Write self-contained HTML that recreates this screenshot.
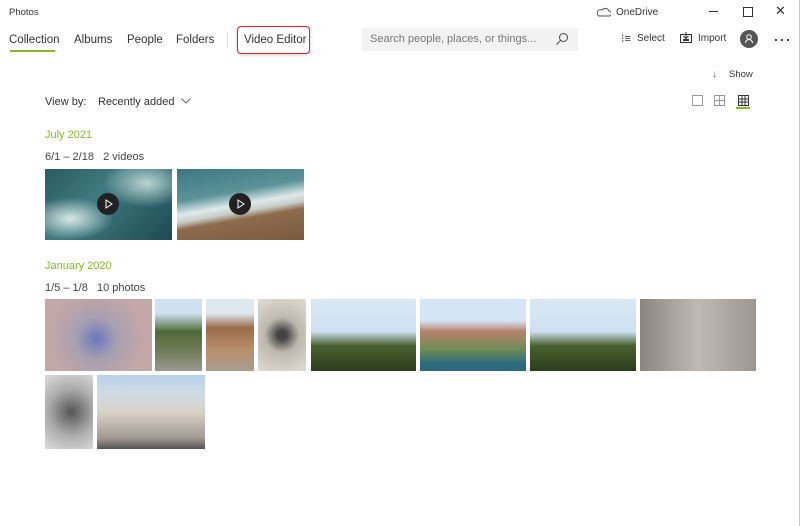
<!DOCTYPE html><html><head><style>
body{margin:0;width:800px;height:526px;background:#fff;font-family:"Liberation Sans",sans-serif;color:#333;position:relative;overflow:hidden}
.a{position:absolute;white-space:nowrap}
.t{font-size:11px}
.g{color:#8ab82a;font-size:11px}
.im{position:absolute}
</style></head><body>
<div class="a" style="left:9px;top:7px;font-size:9.5px">Photos</div>
<div class="a" style="left:616px;top:7px;font-size:10px">OneDrive</div>
<svg class="a" style="left:597px;top:7px" width="14" height="10"><path d="M2 9h10a2.5 2.5 0 0 0 0-5 4 4 0 0 0-7-1A3 3 0 0 0 2 9z" fill="none" stroke="#555"/></svg>
<div class="a" style="left:709px;top:11px;width:9px;height:1px;background:#333"></div>
<div class="a" style="left:743px;top:7px;width:8px;height:8px;border:1px solid #333"></div>
<div class="a" style="left:775px;top:3px;font-size:13px">✕</div>
<div class="a t" style="left:9px;top:34px;font-size:11.5px">Collection</div>
<div class="a" style="left:10px;top:50px;width:45px;height:2px;background:#8ab82a"></div>
<div class="a t" style="left:74px;top:34px;font-size:11.5px">Albums</div>
<div class="a t" style="left:127px;top:34px;font-size:11.5px">People</div>
<div class="a t" style="left:176px;top:34px;font-size:11.5px">Folders</div>
<div class="a" style="left:227px;top:33px;width:1px;height:14px;background:#ddd"></div>
<div class="a" style="left:237px;top:26px;width:71px;height:26px;border:1.5px solid #d8262e;border-radius:4px;box-shadow:0 1px 3px rgba(0,0,0,.2)"></div>
<div class="a t" style="left:244px;top:34px;font-size:11.5px">Video Editor</div>
<div class="a" style="left:362px;top:28px;width:216px;height:23px;background:#f2f2f2"></div>
<div class="a t" style="left:370px;top:33px;color:#777">Search people, places, or things...</div>
<svg class="a" style="left:555px;top:32px" width="14" height="14"><circle cx="8.5" cy="5.5" r="4" fill="none" stroke="#444"/><path d="M5.5 8.5L1.5 12.5" stroke="#444"/></svg>
<div class="a" style="left:621px;top:32px;font-size:11px">⁝≡</div>
<div class="a" style="left:637px;top:33px;font-size:10px">Select</div>
<svg class="a" style="left:680px;top:32px" width="12" height="11"><rect x="0.5" y="2.5" width="11" height="8" fill="none" stroke="#333"/><path d="M6 0v6M3.5 4l2.5 2.5L8.5 4" stroke="#333" fill="none"/><rect x="3" y="7" width="6" height="2" fill="#333"/></svg>
<div class="a" style="left:698px;top:33px;font-size:10px">Import</div>
<div class="a" style="left:740px;top:30px;width:18px;height:18px;border-radius:50%;background:#555"></div>
<svg class="a" style="left:743px;top:33px" width="12" height="12"><circle cx="6" cy="4" r="2.3" fill="none" stroke="#fff"/><path d="M2.5 10a3.5 3.5 0 0 1 7 0" fill="none" stroke="#fff"/></svg>
<svg class="a" style="left:774px;top:38px" width="16" height="4"><circle cx="2" cy="2" r="1.1" fill="#333"/><circle cx="8" cy="2" r="1.1" fill="#333"/><circle cx="14" cy="2" r="1.1" fill="#333"/></svg>
<div class="a" style="left:712px;top:69px;font-size:10px;color:#555">↓</div>
<div class="a" style="left:729px;top:69px;font-size:9.5px">Show</div>
<div class="a" style="left:692px;top:95px;width:9px;height:9px;border:1px solid #999"></div>
<svg class="a" style="left:714px;top:95px" width="11" height="11"><rect x=".5" y=".5" width="10" height="10" fill="none" stroke="#999"/><path d="M5.5 0v11M0 5.5h11" stroke="#999"/></svg>
<svg class="a" style="left:738px;top:95px" width="11" height="11"><rect x=".5" y=".5" width="10" height="10" fill="none" stroke="#333"/><path d="M4 0v11M7 0v11M0 4h11M0 7h11" stroke="#333"/></svg>
<div class="a" style="left:736px;top:107px;width:14px;height:2px;background:#8ab82a"></div>
<div class="a t" style="left:45px;top:96px">View by:</div>
<div class="a t" style="left:98px;top:96px">Recently added</div>
<svg class="a" style="left:181px;top:98px" width="10" height="6"><path d="M.5.5L5 5 9.5.5" fill="none" stroke="#666"/></svg>
<div class="a g" style="left:45px;top:129px">July 2021</div>
<div class="a t" style="left:45px;top:151px;color:#444">6/1 – 2/18 &nbsp;&nbsp;2 videos</div>
<div class="im" style="left:45px;top:169px;width:127px;height:71px;background:radial-gradient(ellipse at 20% 70%,#d7e8e6,transparent 30%),radial-gradient(ellipse at 80% 20%,#b9d4d2,transparent 30%),linear-gradient(135deg,#2b5a60,#3f7a80 40%,#1d4a52)"></div>
<div class="im" style="left:177px;top:169px;width:127px;height:71px;background:linear-gradient(170deg,#3e7680 0,#5c9399 35%,#dfe9ea 50%,#c8cdc8 58%,#8e6b4d 66%,#7a5a3e)"></div>
<div class="im" style="left:97px;top:193px;width:22px;height:22px;border-radius:50%;background:#222"></div>
<div class="im" style="left:229px;top:193px;width:22px;height:22px;border-radius:50%;background:#222"></div>
<svg class="a" style="left:104px;top:199px" width="10" height="10"><path d="M2 1l6 4-6 4z" fill="none" stroke="#fff"/></svg>
<svg class="a" style="left:236px;top:199px" width="10" height="10"><path d="M2 1l6 4-6 4z" fill="none" stroke="#fff"/></svg>
<div class="a g" style="left:45px;top:260px">January 2020</div>
<div class="a t" style="left:45px;top:282px;color:#444">1/5 – 1/8 &nbsp;&nbsp;10 photos</div>
<div class="im" style="left:45px;top:299px;width:107px;height:72px;background:radial-gradient(circle at 48% 55%,#6a79c0,#a79fb0 30%,#c4a7a7 70%)"></div>
<div class="im" style="left:155px;top:299px;width:47px;height:72px;background:linear-gradient(#cfe0f0 0,#cfe0f0 20%,#4f6b3a 45%,#6d7a55 70%,#9a9890)"></div>
<div class="im" style="left:206px;top:299px;width:48px;height:72px;background:linear-gradient(#dfe7ef 0,#dfe7ef 20%,#9a6b4c 40%,#b98e6a 70%,#a79d8e)"></div>
<div class="im" style="left:258px;top:299px;width:48px;height:72px;background:radial-gradient(circle at 50% 50%,#444 10%,#bdb8ae 40%,#e0ddd5)"></div>
<div class="im" style="left:311px;top:299px;width:105px;height:72px;background:linear-gradient(#dbe8f4 0,#cfe1f2 45%,#48602f 65%,#2c3d1e)"></div>
<div class="im" style="left:420px;top:299px;width:106px;height:72px;background:linear-gradient(#d5e5f5 0,#d5e5f5 30%,#b5826a 45%,#6f8c55 70%,#2c6b7e 90%)"></div>
<div class="im" style="left:530px;top:299px;width:106px;height:72px;background:linear-gradient(#dbe8f4 0,#cfe1f2 45%,#48602f 65%,#2c3d1e)"></div>
<div class="im" style="left:640px;top:299px;width:116px;height:72px;background:linear-gradient(90deg,#8b8580,#c0bab4 50%,#9d968f)"></div>
<div class="im" style="left:45px;top:375px;width:48px;height:74px;background:radial-gradient(circle at 55% 50%,#555,#aaa 50%,#ddd)"></div>
<div class="im" style="left:97px;top:375px;width:108px;height:74px;background:linear-gradient(#b8d2ea 0,#cfdae3 25%,#d8d2c8 50%,#a09a92 85%,#555)"></div>
<div class="a" style="left:799px;top:0;width:1px;height:526px;background:#ccc"></div>
</body></html>
